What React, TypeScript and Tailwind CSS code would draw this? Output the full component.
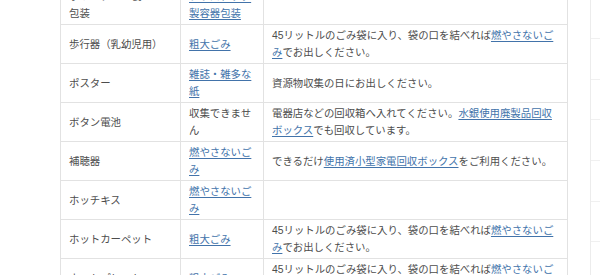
import React from "react";

const L = ({ children }: { children: React.ReactNode }) => (
  <a href="#" className="text-[#4273aa] underline underline-offset-2 decoration-[#4273aa]">
    {children}
  </a>
);

const bag = (
  <>
    45リットルのごみ袋に入り、袋の口を結べれば<L>燃やさないごみ</L>でお出しください。
  </>
);

const rows: [React.ReactNode, React.ReactNode, React.ReactNode][] = [
  [<>ポリエチレン製<br />包装</>, <L>プラスチック製容器包装</L>, ""],
  ["歩行器（乳幼児用）", <L>粗大ごみ</L>, bag],
  ["ポスター", <L>雑誌・雑多な紙</L>, "資源物収集の日にお出しください。"],
  [
    "ボタン電池",
    "収集できません",
    <>電器店などの回収箱へ入れてください。<L>水銀使用廃製品回収ボックス</L>でも回収しています。</>,
  ],
  ["補聴器", <L>燃やさないごみ</L>, <>できるだけ<L>使用済小型家電回収ボックス</L>をご利用ください。</>],
  ["ホッチキス", <L>燃やさないごみ</L>, ""],
  ["ホットカーペット", <L>粗大ごみ</L>, bag],
  ["ホットプレート", <L>粗大ごみ</L>, bag],
];

export default function App() {
  return (
    <div
      className="flex w-[600px] h-[275px] overflow-hidden bg-white text-[#4d4d4d]"
      style={{ fontFamily: '"Liberation Sans", "Noto Sans CJK JP", sans-serif' }}
    >
      <div className="w-[60px] shrink-0" />
      <table className="w-[507px] shrink-0 table-fixed border-collapse self-start mt-[-15px] text-[10.4px] leading-[17px]">
        <colgroup>
          <col className="w-[120px]" />
          <col className="w-[83px]" />
          <col className="w-[304px]" />
        </colgroup>
        <tbody>
          {rows.map((r, i) => (
            <tr key={i}>
              {r.map((c, j) => (
                <td key={j} className="border border-[#e2e2e2] px-2 py-[2px] h-[39px] align-middle">
                  {c}
                </td>
              ))}
            </tr>
          ))}
        </tbody>
      </table>
      <div className="w-[22px] shrink-0" />
      <div className="flex-1 border-l border-[#ececec] flex flex-col">
        <div className="h-[39px] border-b border-[#f0f0f0] shrink-0" />
        {[0, 1, 2, 3, 4, 5].map((i) => (
          <div key={i} className="h-[40.7px] border-b border-[#f0f0f0] shrink-0" />
        ))}
      </div>
    </div>
  );
}
